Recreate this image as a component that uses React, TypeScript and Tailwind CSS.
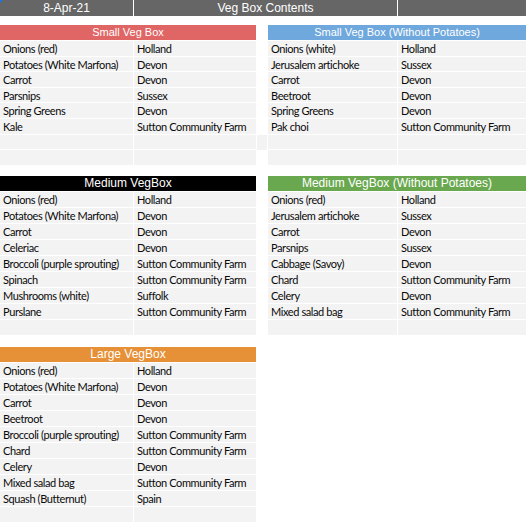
import React from "react";

type Item = [string, string];

const small: Item[] = [
  ["Onions (red)", "Holland"],
  ["Potatoes (White Marfona)", "Devon"],
  ["Carrot", "Devon"],
  ["Parsnips", "Sussex"],
  ["Spring Greens", "Devon"],
  ["Kale", "Sutton Community Farm"],
  ["", ""],
  ["", ""],
];

const smallNoPot: Item[] = [
  ["Onions (white)", "Holland"],
  ["Jerusalem artichoke", "Sussex"],
  ["Carrot", "Devon"],
  ["Beetroot", "Devon"],
  ["Spring Greens", "Devon"],
  ["Pak choi", "Sutton Community Farm"],
  ["", ""],
  ["", ""],
];

const medium: Item[] = [
  ["Onions (red)", "Holland"],
  ["Potatoes (White Marfona)", "Devon"],
  ["Carrot", "Devon"],
  ["Celeriac", "Devon"],
  ["Broccoli (purple sprouting)", "Sutton Community Farm"],
  ["Spinach", "Sutton Community Farm"],
  ["Mushrooms (white)", "Suffolk"],
  ["Purslane", "Sutton Community Farm"],
  ["", ""],
];

const mediumNoPot: Item[] = [
  ["Onions (red)", "Holland"],
  ["Jerusalem artichoke", "Sussex"],
  ["Carrot", "Devon"],
  ["Parsnips", "Sussex"],
  ["Cabbage (Savoy)", "Devon"],
  ["Chard", "Sutton Community Farm"],
  ["Celery", "Devon"],
  ["Mixed salad bag", "Sutton Community Farm"],
  ["", ""],
];

const large: Item[] = [
  ["Onions (red)", "Holland"],
  ["Potatoes (White Marfona)", "Devon"],
  ["Carrot", "Devon"],
  ["Beetroot", "Devon"],
  ["Broccoli (purple sprouting)", "Sutton Community Farm"],
  ["Chard", "Sutton Community Farm"],
  ["Celery", "Devon"],
  ["Mixed salad bag", "Sutton Community Farm"],
  ["Squash (Butternut)", "Spain"],
  ["", ""],
];

function BoxTable({
  title,
  color,
  items,
  left,
  right,
  rowH,
  titleSize,
}: {
  title: string;
  color: string;
  items: Item[];
  left: string;
  right: string;
  rowH: string;
  titleSize: string;
}) {
  return (
    <div className="flex flex-col gap-[1px]">
      <div
        className={`h-[15px] ${color} ${titleSize} text-white text-center leading-[15px] font-['Liberation_Sans',Arial,sans-serif]`}
      >
        {title}
      </div>
      {items.map(([veg, origin], i) => (
        <div key={i} className={`flex gap-[1px] ${rowH}`}>
          <div className={`${left} bg-[#f3f3f3] pl-[3px] text-[11px] leading-[15px] tracking-[-0.4px] text-[#0a0a0a] whitespace-nowrap overflow-hidden`}>
            {veg}
          </div>
          <div className={`${right} bg-[#f3f3f3] pl-[3px] text-[11px] leading-[15px] tracking-[-0.4px] text-[#0a0a0a] whitespace-nowrap overflow-hidden`}>
            {origin}
          </div>
        </div>
      ))}
    </div>
  );
}

export default function App() {
  return (
    <div className="relative w-[526px] h-[525px] bg-white overflow-hidden font-['Lato','Open_Sans',sans-serif]">
      {/* selection marker */}
      <div className="absolute left-0 top-0 w-[2px] h-[2px] bg-[#1a73e8]" />

      <div className="flex gap-[1px] h-[16px] w-[526px] text-white text-[12px] leading-[16px] font-['Liberation_Sans',Arial,sans-serif]">
        <div className="w-[133px] bg-[#666666] text-center">8-Apr-21</div>
        <div className="w-[263px] bg-[#666666] text-center">Veg Box Contents</div>
        <div className="w-[128px] bg-[#666666]" />
      </div>

      {/* small boxes */}
      <div className="flex mt-[9px]">
        <div className="w-[256px]">
          <BoxTable title="Small Veg Box" color="bg-[#e06666]" titleSize="text-[11px]" items={small} left="w-[133px]" right="w-[122px]" rowH="h-[14.6px]" />
        </div>
        <div className="w-[12px] pt-[110px] px-[1px]">
          <div className="h-[15px] bg-[#f3f3f3] w-[10px]" />
        </div>
        <div className="w-[258px]">
          <BoxTable title="Small Veg Box (Without Potatoes)" color="bg-[#6fa8dc]" titleSize="text-[11px]" items={smallNoPot} left="w-[129px]" right="w-[128px]" rowH="h-[14.6px]" />
        </div>
      </div>

      {/* medium boxes */}
      <div className="flex mt-[11px] gap-[12px]">
        <div className="w-[256px]">
          <BoxTable title="Medium VegBox" color="bg-black" titleSize="text-[12px]" items={medium} left="w-[133px]" right="w-[122px]" rowH="h-[15px]" />
        </div>
        <div className="w-[258px]">
          <BoxTable title="Medium VegBox (Without Potatoes)" color="bg-[#6aa84f]" titleSize="text-[12px]" items={mediumNoPot} left="w-[129px]" right="w-[128px]" rowH="h-[15px]" />
        </div>
      </div>

      {/* large box */}
      <div className="flex mt-[12px]">
        <div className="w-[256px]">
          <BoxTable title="Large VegBox" color="bg-[#e69138]" titleSize="text-[12px]" items={large} left="w-[133px]" right="w-[122px]" rowH="h-[15px]" />
        </div>
      </div>
    </div>
  );
}
